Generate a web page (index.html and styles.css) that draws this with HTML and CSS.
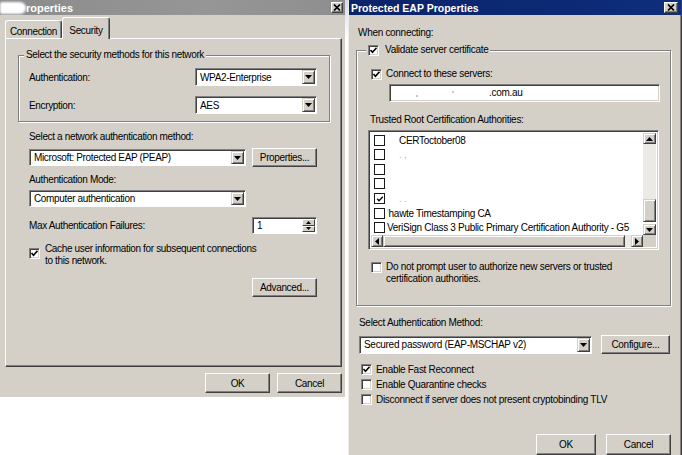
FILE: index.html
```html
<!DOCTYPE html>
<html>
<head>
<meta charset="utf-8">
<link rel="stylesheet" href="styles.css">
</head>
<body>
<div class="screen">
  <div class="win win-left">
    <div class="tb tb-gray">
      <span class="smudge"></span><span class="ttl">roperties</span>
      <span class="xbtn"><svg width="8" height="7" viewBox="0 0 8 7"><path d="M1 0.5L7 6.5M7 0.5L1 6.5" stroke="#000" stroke-width="1.7"/></svg></span>
    </div>
    <div class="tabs">
      <div class="tab tab-conn">Connection</div>
      <div class="tab tab-sec">Security</div>
    </div>
    <div class="panel">
      <div class="grp grp-l">
        <div class="legend">Select the security methods for this network</div>
        <div class="frow first">
          <span>Authentication:</span>
          <div class="sel w122"><span class="sv">WPA2-Enterprise</span><span class="dd"><svg width="7" height="4" viewBox="0 0 7 4"><path d="M0 0h7L3.5 4z"/></svg></span></div>
        </div>
        <div class="frow second">
          <span>Encryption:</span>
          <div class="sel w122"><span class="sv">AES</span><span class="dd"><svg width="7" height="4" viewBox="0 0 7 4"><path d="M0 0h7L3.5 4z"/></svg></span></div>
        </div>
      </div>
      <div class="lbl l-method">Select a network authentication method:</div>
      <div class="crow r-method">
        <div class="sel w217 h17"><span class="sv">Microsoft: Protected EAP (PEAP)</span><span class="dd"><svg width="7" height="4" viewBox="0 0 7 4"><path d="M0 0h7L3.5 4z"/></svg></span></div>
        <div class="btn b-prop">Properties...</div>
      </div>
      <div class="lbl l-mode">Authentication Mode:</div>
      <div class="crow r-mode">
        <div class="sel w217 h17"><span class="sv">Computer authentication</span><span class="dd"><svg width="7" height="4" viewBox="0 0 7 4"><path d="M0 0h7L3.5 4z"/></svg></span></div>
      </div>
      <div class="crow r-max">
        <span>Max Authentication Failures:</span>
        <div class="spin"><span class="sv">1</span><span class="spinbtns"><span class="sb"><svg width="5" height="3" viewBox="0 0 5 3"><path d="M0 3h5L2.5 0z"/></svg></span><span class="sb"><svg width="5" height="3" viewBox="0 0 5 3"><path d="M0 0h5L2.5 3z"/></svg></span></span></div>
      </div>
      <div class="crow r-cache">
        <span class="cb"><svg width="9" height="9" viewBox="0 0 9 9"><polyline points="1.5,4 3.5,6.2 7.5,1.8" fill="none" stroke="#000" stroke-width="1.6"/></svg></span>
        <span class="cbtext">Cache user information for subsequent connections<br>to this network.</span>
      </div>
      <div class="crow r-adv"><div class="btn b-adv">Advanced...</div></div>
    </div>
    <div class="btnrow-l">
      <div class="btn b-ok">OK</div>
      <div class="btn b-cancel">Cancel</div>
    </div>
  </div>

  <div class="gap"></div>

  <div class="win win-right">
    <div class="tb tb-blue">
      <span class="ttl ttl-r">Protected EAP Properties</span>
      <span class="xbtn xbtn-r"><svg width="8" height="7" viewBox="0 0 8 7"><path d="M1 0.5L7 6.5M7 0.5L1 6.5" stroke="#000" stroke-width="1.7"/></svg></span>
    </div>
    <div class="when">When connecting:</div>
    <div class="grp grp-r">
      <div class="legend legend-r">
        <span class="cb"><svg width="9" height="9" viewBox="0 0 9 9"><polyline points="1.5,4 3.5,6.2 7.5,1.8" fill="none" stroke="#000" stroke-width="1.6"/></svg></span>
        <span>Validate server certificate</span>
      </div>
      <div class="cbrow r-connect">
        <span class="cb"><svg width="9" height="9" viewBox="0 0 9 9"><polyline points="1.5,4 3.5,6.2 7.5,1.8" fill="none" stroke="#000" stroke-width="1.6"/></svg></span>
        <span>Connect to these servers:</span>
      </div>
      <div class="inp"><span class="speck s1"></span><span class="speck s2"></span><span class="domain">.com.au</span></div>
      <div class="lbl l-trusted">Trusted Root Certification Authorities:</div>
      <div class="listbox">
        <div class="items">
          <div class="item"><span class="fcb"></span><span class="itxt ind">CERToctober08</span></div>
          <div class="item"><span class="fcb"></span><span class="itxt ind"><span class="faint">. ,</span></span></div>
          <div class="item"><span class="fcb"></span></div>
          <div class="item"><span class="fcb"></span></div>
          <div class="item"><span class="fcb on"><svg width="8" height="8" viewBox="0 0 8 8"><polyline points="1.2,3.8 3,5.8 6.8,1.8" fill="none" stroke="#000" stroke-width="1.3"/></svg></span><span class="itxt ind"><span class="faint">. .</span></span></div>
          <div class="item"><span class="fcb"></span><span class="itxt"><span class="faint">'</span>hawte Timestamping CA</span></div>
          <div class="item"><span class="fcb"></span><span class="itxt">VeriSign Class 3 Public Primary Certification Authority - G5</span></div>
        </div>
        <div class="vscroll">
          <span class="sbtn"><svg width="7" height="4" viewBox="0 0 7 4"><path d="M0 4h7L3.5 0z"/></svg></span>
          <span class="vtrack"></span>
          <span class="vthumb"></span>
          <span class="sbtn"><svg width="7" height="4" viewBox="0 0 7 4"><path d="M0 0h7L3.5 4z"/></svg></span>
        </div>
        <div class="hscroll">
          <span class="hbtn"><svg width="4" height="7" viewBox="0 0 4 7"><path d="M4 0v7L0 3.5z"/></svg></span>
          <span class="hthumb"></span>
          <span class="htrack"></span>
          <span class="hbtn"><svg width="4" height="7" viewBox="0 0 4 7"><path d="M0 0v7L4 3.5z"/></svg></span>
        </div>
        <div class="corner"></div>
      </div>
      <div class="cbrow r-noprompt">
        <span class="cb"></span>
        <span>Do not prompt user to authorize new servers or trusted<br>certification authorities.</span>
      </div>
    </div>
    <div class="lbl l-selauth">Select Authentication Method:</div>
    <div class="crow r-selauth">
      <div class="sel w233"><span class="sv">Secured password (EAP-MSCHAP v2)</span><span class="dd"><svg width="7" height="4" viewBox="0 0 7 4"><path d="M0 0h7L3.5 4z"/></svg></span></div>
      <div class="btn b-conf">Configure...</div>
    </div>
    <div class="opts">
      <div class="cbrow opt">
        <span class="cb"><svg width="9" height="9" viewBox="0 0 9 9"><polyline points="1.5,4 3.5,6.2 7.5,1.8" fill="none" stroke="#000" stroke-width="1.6"/></svg></span>
        <span>Enable Fast Reconnect</span>
      </div>
      <div class="cbrow opt"><span class="cb"></span><span>Enable Quarantine checks</span></div>
      <div class="cbrow opt"><span class="cb"></span><span>Disconnect if server does not present cryptobinding TLV</span></div>
    </div>
    <div class="btnrow-r">
      <div class="btn b-ok-r">OK</div>
      <div class="btn b-cancel-r">Cancel</div>
    </div>
  </div>
</div>
</body>
</html>
```

FILE: styles.css
```css
* { box-sizing: border-box; }

html, body {
  margin: 0;
  padding: 0;
  background: #fff;
}

body {
  width: 682px;
  height: 455px;
  overflow: hidden;
  font-family: "Liberation Sans", Arial, sans-serif;
  font-size: 10px;
  color: #000;
}

.screen {
  display: flex;
  align-items: flex-start;
  width: 682px;
  height: 455px;
}

/* ---------- windows ---------- */
.win {
  background: #d4d0c8;
  flex: none;
  display: flex;
  flex-direction: column;
}

.win-left {
  width: 345px;
  height: 397px;
  letter-spacing: -0.35px;
}

.gap {
  width: 3px;
  height: 455px;
  flex: none;
  background: linear-gradient(#cfdcf0, #fff 40px);
}

.win-right {
  width: 334px;
  height: 460px;
  border-left: 1px solid #ecebe7;
  border-right: 1px solid #404040;
  box-shadow: inset -1px 0 0 #808080;
  letter-spacing: -0.3px;
}

/* ---------- title bars ---------- */
.tb {
  height: 15px;
  display: flex;
  align-items: center;
  color: #fff;
  font-weight: bold;
  font-size: 11px;
  letter-spacing: 0;
  flex: none;
}

.tb-gray {
  background: linear-gradient(90deg, #8b8b8b, #969696 60%, #8e8e8e);
}

.tb-blue {
  background: linear-gradient(90deg, #0a246a, #0c2a76 70%, #0e2e7c);
  padding-left: 2px;
}

.smudge {
  width: 26px;
  height: 12px;
  background: #fff;
  border-radius: 2px 7px 7px 2px;
  filter: blur(1px);
}

.ttl { flex: 1; }

.ttl-r { font-size: 10.5px; }

.xbtn {
  width: 12px;
  height: 11px;
  margin-right: 2px;
  background: #d4d0c8;
  border: 1px solid;
  border-color: #fff #404040 #404040 #fff;
  box-shadow: inset -1px -1px 0 #808080;
  display: flex;
  align-items: center;
  justify-content: center;
}

.xbtn-r {
  width: 14px;
  margin-right: 3px;
}

/* ---------- tabs ---------- */
.tabs {
  display: flex;
  align-items: flex-end;
  height: 21px;
  margin-top: 2px;
  padding-left: 5px;
  flex: none;
}

.tab {
  border: 1px solid;
  border-color: #fff #404040 transparent #fff;
  border-bottom: none;
  box-shadow: inset -1px 0 0 #808080;
  border-radius: 3px 3px 0 0;
  display: flex;
  align-items: center;
  justify-content: center;
  padding-top: 3px;
  background: #d4d0c8;
}

.tab-conn {
  width: 57px;
  height: 18px;
}

.tab-sec {
  width: 48px;
  height: 22px;
  margin-bottom: -1px;
  position: relative;
  z-index: 1;
}

/* ---------- tab panel ---------- */
.panel {
  margin-left: 5px;
  width: 337px;
  height: 329px;
  border: 1px solid;
  border-color: #fff #404040 #404040 #fff;
  box-shadow: inset -1px -1px 0 #808080;
  display: flex;
  flex-direction: column;
  flex: none;
}

/* ---------- group boxes ---------- */
.grp {
  border: 1px solid #808080;
  box-shadow: inset 1px 1px 0 #fff, 1px 1px 0 #fff;
  display: flex;
  flex-direction: column;
  flex: none;
}

.legend {
  width: max-content;
  margin-top: -7px;
  line-height: 12px;
  padding: 0 2px;
  background: #d4d0c8;
}

.grp-l {
  margin: 16px 0 0 12px;
  width: 312px;
  padding: 0 12px 7px 10px;
}

.grp-l .legend { margin-left: -5px; }

.frow {
  display: flex;
  align-items: center;
  justify-content: space-between;
  height: 18px;
}

.frow.first { margin-top: 7px; }
.frow.second { margin-top: 10px; }

/* ---------- controls ---------- */
.sel {
  display: flex;
  height: 18px;
  background: #fff;
  border: 1px solid;
  border-color: #808080 #fff #fff #808080;
  box-shadow: inset 1px 1px 0 #404040;
  padding: 1px;
  flex: none;
}

.sel.h17 { height: 17px; }
.w122 { width: 122px; }
.w217 { width: 217px; }
.w233 { width: 233px; }

.sv {
  flex: 1;
  display: flex;
  align-items: center;
  padding-left: 3px;
  white-space: nowrap;
  overflow: hidden;
}

.dd {
  width: 13px;
  background: #d4d0c8;
  border: 1px solid;
  border-color: #d4d0c8 #404040 #404040 #d4d0c8;
  box-shadow: inset 1px 1px 0 #fff, inset -1px -1px 0 #808080;
  display: flex;
  align-items: center;
  justify-content: center;
}

.btn {
  display: flex;
  align-items: center;
  justify-content: center;
  background: #d4d0c8;
  border: 1px solid;
  border-color: #fff #404040 #404040 #fff;
  box-shadow: inset -1px -1px 0 #808080;
  flex: none;
  white-space: nowrap;
}

.lbl {
  line-height: 12px;
  flex: none;
}

.crow {
  display: flex;
  align-items: center;
  margin-left: 23px;
  width: 288px;
  flex: none;
}

.l-method { margin: 9px 0 0 23px; }
.r-method { margin-top: 5px; height: 19px; }
.b-prop { width: 65px; height: 19px; margin-left: 6px; }
.l-mode { margin: 7px 0 0 23px; }
.r-mode { margin-top: 4px; }
.r-max { margin-top: 10px; justify-content: space-between; }

.spin {
  display: flex;
  width: 65px;
  height: 17px;
  background: #fff;
  border: 1px solid;
  border-color: #808080 #fff #fff #808080;
  box-shadow: inset 1px 1px 0 #404040;
  padding: 1px;
}

.spinbtns {
  width: 13px;
  display: flex;
  flex-direction: column;
}

.sb {
  flex: 1;
  background: #d4d0c8;
  border: 1px solid;
  border-color: #fff #404040 #404040 #fff;
  display: flex;
  align-items: center;
  justify-content: center;
}

.cb {
  width: 11px;
  height: 11px;
  flex: none;
  background: #fff;
  border: 1px solid;
  border-color: #808080 #fff #fff #808080;
  box-shadow: inset 1px 1px 0 #404040, inset -1px -1px 0 #d4d0c8;
  display: flex;
  align-items: center;
  justify-content: center;
}

.r-cache {
  margin-top: 9px;
  align-items: flex-start;
}

.r-cache .cb { margin-top: 5px; }

.cbtext {
  margin-left: 5px;
  line-height: 12px;
}

.r-adv {
  margin-top: 11px;
  justify-content: flex-end;
}

.b-adv { width: 65px; height: 19px; }

.btnrow-l {
  display: flex;
  justify-content: flex-end;
  gap: 7px;
  margin-top: 6px;
  padding-right: 3px;
}

.b-ok, .b-cancel { width: 65px; height: 20px; }

/* ---------- right dialog ---------- */
.when {
  margin: 12px 0 0 9px;
  line-height: 12px;
}

.grp-r {
  margin: 11px 0 0 7px;
  width: 315px;
  padding: 0 0 20px 14px;
}

.legend-r {
  display: flex;
  align-items: center;
  gap: 6px;
  margin-left: -5px;
}

.cbrow {
  display: flex;
  align-items: center;
  gap: 4px;
  line-height: 12px;
}

.r-connect { margin-top: 12px; height: 12px; }

.inp {
  margin: 4px 0 0 18px;
  width: 271px;
  height: 18px;
  background: #fff;
  border: 1px solid;
  border-color: #808080 #fff #fff #808080;
  box-shadow: inset 1px 1px 0 #404040, inset -1px -1px 0 #d4d0c8;
  display: flex;
  align-items: center;
}

.domain { margin-left: 35px; margin-top: -1px; }

.speck {
  width: 2px;
  height: 2px;
  background: #c8c8c8;
  flex: none;
}

.s1 { margin-left: 26px; margin-top: 6px; }
.s2 { margin-left: 34px; margin-top: -2px; }

.l-trusted { margin: 12px 0 0 -1px; }

.listbox {
  margin: 4px 0 0 -3px;
  width: 291px;
  height: 120px;
  border: 1px solid;
  border-color: #808080 #fff #fff #808080;
  box-shadow: inset 1px 1px 0 #404040, inset -1px -1px 0 #d4d0c8;
  padding: 2px;
  background: #fff;
  display: grid;
  grid-template-columns: 272px 13px;
  grid-template-rows: 102px 12px;
}

.items {
  display: grid;
  grid-template-rows: repeat(7, 1fr);
  padding-left: 3px;
  overflow: hidden;
}

.item {
  display: flex;
  align-items: center;
  white-space: nowrap;
}

.fcb {
  width: 11px;
  height: 11px;
  border: 1px solid #1a1a1a;
  background: #fff;
  flex: none;
  display: flex;
  align-items: center;
  justify-content: center;
}

.itxt { margin-left: 2px; }
.itxt.ind { margin-left: 14px; }
.faint { color: #b8b8b8; }

.vscroll {
  display: flex;
  flex-direction: column;
}

.sbtn, .hbtn {
  background: #d4d0c8;
  border: 1px solid;
  border-color: #d4d0c8 #404040 #404040 #d4d0c8;
  box-shadow: inset 1px 1px 0 #fff, inset -1px -1px 0 #808080;
  display: flex;
  align-items: center;
  justify-content: center;
  flex: none;
}

.sbtn { height: 11px; }

.vtrack {
  flex: 1;
  background: #eceae6;
}

.vthumb {
  height: 23px;
  margin-bottom: 2px;
  background: #d4d0c8;
  border: 1px solid;
  border-color: #d4d0c8 #404040 #404040 #d4d0c8;
  box-shadow: inset 1px 1px 0 #fff, inset -1px -1px 0 #808080;
}

.hscroll {
  display: flex;
  height: 12px;
}

.hbtn { width: 12px; }

.hthumb {
  width: 242px;
  flex: none;
  background: #d4d0c8;
  border: 1px solid;
  border-color: #d4d0c8 #404040 #404040 #d4d0c8;
  box-shadow: inset 1px 1px 0 #fff, inset -1px -1px 0 #808080;
}

.htrack {
  flex: 1;
  background: #eceae6;
}

.corner { background: #d4d0c8; }

.r-noprompt {
  margin-top: 11px;
  align-items: flex-start;
}

.r-noprompt .cb { margin-top: 1px; }

.l-selauth { margin: 11px 0 0 10px; }

.r-selauth {
  margin: 6px 0 0 10px;
  width: auto;
  height: 19px;
}

.b-conf { width: 69px; height: 19px; margin-left: 9px; }

.opts {
  margin: 8px 0 0 12px;
  display: flex;
  flex-direction: column;
}

.opt { height: 15px; }

.btnrow-r {
  display: flex;
  justify-content: flex-end;
  gap: 10px;
  margin-top: 27px;
  padding-right: 10px;
}

.b-ok-r { width: 60px; height: 21px; }
.b-cancel-r { width: 65px; height: 21px; }
```
